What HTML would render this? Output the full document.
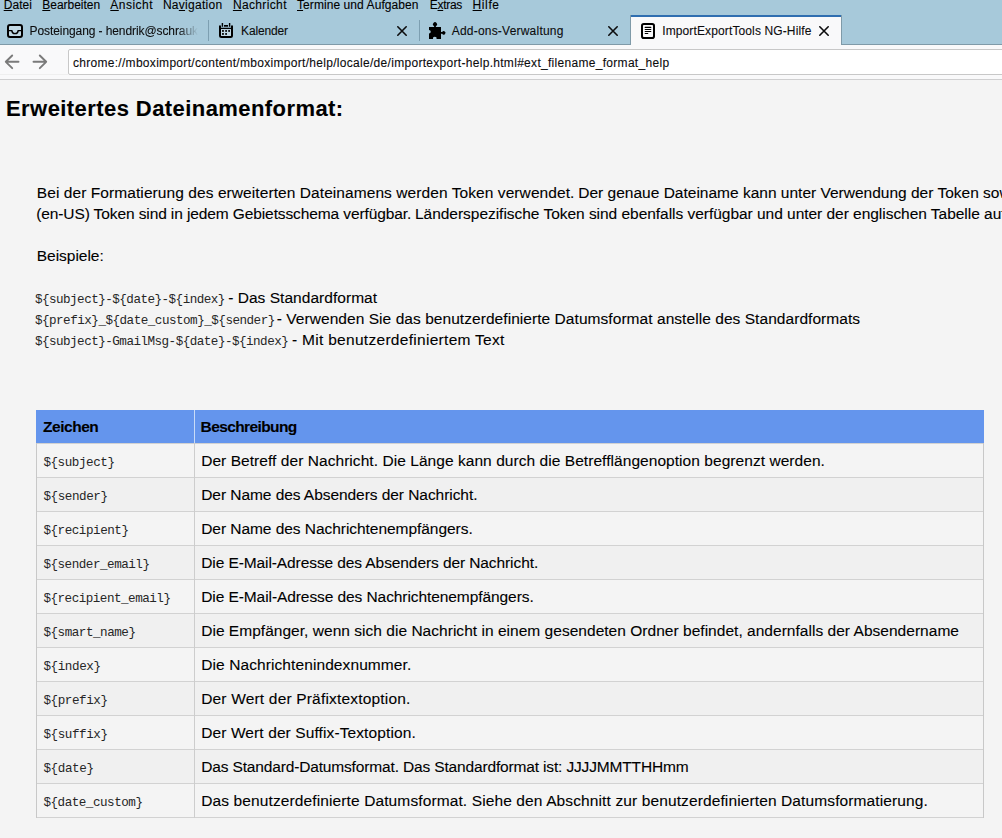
<!DOCTYPE html>
<html><head><meta charset="utf-8">
<style>
html,body{margin:0;padding:0;width:1002px;height:838px;overflow:hidden;background:#f4f4f4;font-family:"Liberation Sans",sans-serif;}
.abs{position:absolute;}
.t{position:absolute;white-space:pre;line-height:normal;-webkit-text-stroke:0.1px currentColor;}
#topbar{position:absolute;left:0;top:0;width:1002px;height:44px;background:#a7c9da;}
#topline{position:absolute;left:0;top:44px;width:1002px;height:1px;background:#7f9aa8;}
#nav{position:absolute;left:0;top:45px;width:1002px;height:34px;background:#f9f9fa;}
#navline{position:absolute;left:0;top:79px;width:1002px;height:1px;background:#cfcfd0;}
#url{position:absolute;left:68px;top:49px;width:940px;height:24px;background:#fff;border:1px solid #c8c8c8;border-radius:2px;}
.sep{position:absolute;top:20px;width:1px;height:21px;background:#7d9fb1;}
#atab{position:absolute;left:630px;top:15px;width:210px;height:30px;background:#f9f9fa;border-left:1px solid #7f9aa8;border-right:1px solid #7f9aa8;}
#atab .line{position:absolute;left:0;top:0;width:100%;height:2px;background:#2f6eb0;}
.ul0 .u,.ul1 .u,.ul2 .u{text-decoration:underline;}
.fade{-webkit-mask-image:linear-gradient(to right,#000 148px,transparent 168px);}
</style></head><body>
<div id="topbar"></div>
<div id="topline"></div>
<div class="sep" style="left:208px"></div>
<div class="sep" style="left:419px"></div>
<div id="atab"><div class="line"></div></div>
<div id="nav"></div>
<div id="navline"></div>
<div id="url"></div>
<div class="abs" style="left:0;top:74px;width:68px;height:1px;background:#efefef"></div>
<div class="abs" style="left:36px;top:410px;width:948px;height:33px;background:#6495ed"></div>
<div class="abs" style="left:194px;top:410px;width:1px;height:33px;background:#c9dbf7"></div>
<div class="abs" style="left:36px;top:443px;width:948px;height:34px;background:#f4f4f4"></div>
<div class="abs" style="left:36px;top:443px;width:948px;height:1px;background:#d2d2d2"></div>
<div class="abs" style="left:36px;top:477px;width:948px;height:34px;background:#f0f0f0"></div>
<div class="abs" style="left:36px;top:477px;width:948px;height:1px;background:#d2d2d2"></div>
<div class="abs" style="left:36px;top:511px;width:948px;height:34px;background:#f4f4f4"></div>
<div class="abs" style="left:36px;top:511px;width:948px;height:1px;background:#d2d2d2"></div>
<div class="abs" style="left:36px;top:545px;width:948px;height:34px;background:#f0f0f0"></div>
<div class="abs" style="left:36px;top:545px;width:948px;height:1px;background:#d2d2d2"></div>
<div class="abs" style="left:36px;top:579px;width:948px;height:34px;background:#f4f4f4"></div>
<div class="abs" style="left:36px;top:579px;width:948px;height:1px;background:#d2d2d2"></div>
<div class="abs" style="left:36px;top:613px;width:948px;height:34px;background:#f0f0f0"></div>
<div class="abs" style="left:36px;top:613px;width:948px;height:1px;background:#d2d2d2"></div>
<div class="abs" style="left:36px;top:647px;width:948px;height:34px;background:#f4f4f4"></div>
<div class="abs" style="left:36px;top:647px;width:948px;height:1px;background:#d2d2d2"></div>
<div class="abs" style="left:36px;top:681px;width:948px;height:34px;background:#f0f0f0"></div>
<div class="abs" style="left:36px;top:681px;width:948px;height:1px;background:#d2d2d2"></div>
<div class="abs" style="left:36px;top:715px;width:948px;height:34px;background:#f4f4f4"></div>
<div class="abs" style="left:36px;top:715px;width:948px;height:1px;background:#d2d2d2"></div>
<div class="abs" style="left:36px;top:749px;width:948px;height:34px;background:#f0f0f0"></div>
<div class="abs" style="left:36px;top:749px;width:948px;height:1px;background:#d2d2d2"></div>
<div class="abs" style="left:36px;top:783px;width:948px;height:34px;background:#f4f4f4"></div>
<div class="abs" style="left:36px;top:783px;width:948px;height:1px;background:#d2d2d2"></div>
<div class="abs" style="left:36px;top:817px;width:948px;height:1px;background:#d2d2d2"></div>
<div class="abs" style="left:36px;top:443px;width:1px;height:375px;background:#c8c8c8"></div>
<div class="abs" style="left:983px;top:443px;width:1px;height:375px;background:#c8c8c8"></div>
<div class="abs" style="left:194px;top:443px;width:1px;height:375px;background:#cdcdcd"></div>

<svg class="abs" style="left:0;top:0" width="1002" height="80" viewBox="0 0 1002 80">
 <!-- inbox -->
 <rect x="8" y="25" width="14" height="12" rx="2" fill="rgba(255,255,255,0.3)" stroke="#000" stroke-width="2"/>
 <path d="M8.5 30.6 H11.8 C12.2 34.6 17.8 34.6 18.2 30.6 H21.5" fill="none" stroke="#000" stroke-width="1.4"/>
 <!-- calendar -->
 <rect x="220.5" y="28.5" width="11" height="8" fill="rgba(255,255,255,0.3)"/>
 <path d="M220 25.5 V35.5 Q220 37 221.5 37 H230.5 Q232 37 232 35.5 V25.5" fill="none" stroke="#000" stroke-width="2"/>
 <path d="M220.5 28.4 H231.5" stroke="#000" stroke-width="1.3"/>
 <path d="M222.4 23 V26.8 M229.6 23 V26.8" stroke="#000" stroke-width="1.4"/>
 <rect x="224" y="25" width="4" height="1.7" fill="#000"/>
 <rect x="222" y="30.1" width="1.9" height="1.7" fill="#000"/>
 <rect x="225.2" y="30.1" width="1.8" height="1.7" fill="#000"/>
 <rect x="228.2" y="30.1" width="1.8" height="1.7" fill="#000"/>
 <rect x="222" y="33.1" width="1.9" height="1.7" fill="#000"/>
 <rect x="225.2" y="33.1" width="1.8" height="1.7" fill="#000"/>
 <!-- close X kalender / addons -->
 <path d="M397.8 26.8 L406.2 35.2 M406.2 26.8 L397.8 35.2" stroke="#0c0c0d" stroke-width="1.6" stroke-linecap="round"/>
 <path d="M608.8 26.8 L617.2 35.2 M617.2 26.8 L608.8 35.2" stroke="#0c0c0d" stroke-width="1.6" stroke-linecap="round"/>
 <path d="M819.8 26.8 L828.2 35.2 M828.2 26.8 L819.8 35.2" stroke="#0c0c0d" stroke-width="1.6" stroke-linecap="round"/>
 <!-- puzzle -->
 <path fill="#000" d="M429 27 H434.1 V26 A2 2 0 1 1 435.9 26 V27 H441 V32 H442.2 A1.75 1.75 0 1 1 442.2 33.8 H441 V39 H436.5 A1.75 1.75 0 1 0 433.1 39 H429 V33.6 A1.75 1.75 0 1 0 429 30.1 Z"/>
 <!-- doc -->
 <rect x="642" y="24" width="12" height="14" rx="1.8" fill="none" stroke="#000" stroke-width="2"/>
 <path d="M645.2 27.4 H650.8 M645.2 29.5 H650.8 M645.2 31.5 H650.8 M645.2 33.5 H647.8" stroke="#000" stroke-width="1.1" stroke-linecap="round"/>
 <!-- arrows -->
 <path d="M18.5 61.8 H5.8 M12.2 55.5 L5.8 61.8 L12.2 68.2" fill="none" stroke="#7a7a7a" stroke-width="1.9" stroke-linecap="round" stroke-linejoin="round"/>
 <path d="M33.5 61.8 H46.2 M39.8 55.5 L46.2 61.8 L39.8 68.2" fill="none" stroke="#7a7a7a" stroke-width="1.9" stroke-linecap="round" stroke-linejoin="round"/>
</svg>

<div class='t menu ul0' style='left:3.7px;top:-2.0px;font-family:"Liberation Sans";font-size:12px;font-weight:400;color:#000;letter-spacing:0.046px'><span class='u'>D</span>atei</div>
<div class='t menu ul0' style='left:42.3px;top:-2.0px;font-family:"Liberation Sans";font-size:12px;font-weight:400;color:#000;letter-spacing:-0.027px'><span class='u'>B</span>earbeiten</div>
<div class='t menu ul0' style='left:110.3px;top:-2.0px;font-family:"Liberation Sans";font-size:12px;font-weight:400;color:#000;letter-spacing:0.473px'><span class='u'>A</span>nsicht</div>
<div class='t menu ul2' style='left:162.9px;top:-2.0px;font-family:"Liberation Sans";font-size:12px;font-weight:400;color:#000;letter-spacing:0.277px'>Na<span class='u'>v</span>igation</div>
<div class='t menu ul0' style='left:232.9px;top:-2.0px;font-family:"Liberation Sans";font-size:12px;font-weight:400;color:#000;letter-spacing:0.364px'><span class='u'>N</span>achricht</div>
<div class='t menu ul0' style='left:297.0px;top:-2.0px;font-family:"Liberation Sans";font-size:12px;font-weight:400;color:#000;letter-spacing:0.074px'><span class='u'>T</span>ermine und Aufgaben</div>
<div class='t menu ul1' style='left:429.8px;top:-2.0px;font-family:"Liberation Sans";font-size:12px;font-weight:400;color:#000;letter-spacing:-0.303px'>E<span class='u'>x</span>tras</div>
<div class='t menu ul0' style='left:472.6px;top:-2.0px;font-family:"Liberation Sans";font-size:12px;font-weight:400;color:#000;letter-spacing:0.596px'><span class='u'>H</span>ilfe</div>
<div class='t fade' style='left:29.6px;top:24.0px;font-family:"Liberation Sans";font-size:12px;font-weight:400;color:#0c0c0d;letter-spacing:-0.091px'>Posteingang - hendrik@schrauk</div>
<div class='t ' style='left:241.1px;top:24.0px;font-family:"Liberation Sans";font-size:12px;font-weight:400;color:#0c0c0d;letter-spacing:-0.164px'>Kalender</div>
<div class='t ' style='left:451.7px;top:24.0px;font-family:"Liberation Sans";font-size:12px;font-weight:400;color:#0c0c0d;letter-spacing:0.213px'>Add-ons-Verwaltung</div>
<div class='t ' style='left:662.2px;top:24.0px;font-family:"Liberation Sans";font-size:12px;font-weight:400;color:#0c0c0d;letter-spacing:0.126px'>ImportExportTools NG-Hilfe</div>
<div class='t ' style='left:72.9px;top:55.6px;font-family:"Liberation Sans";font-size:12px;font-weight:400;color:#0c0c0d;letter-spacing:0.299px'>chrome://mboximport/content/mboximport/help/locale/de/importexport-help.html#ext_filename_format_help</div>
<div class='t ' style='left:6.0px;top:95.5px;font-family:"Liberation Sans";font-size:22px;font-weight:700;color:#000;letter-spacing:0.428px'>Erweitertes Dateinamenformat:</div>
<div class='t ' style='left:36.8px;top:184.0px;font-family:"Liberation Sans";font-size:15.5px;font-weight:400;color:#000;letter-spacing:0.076px'>Bei der Formatierung des erweiterten Dateinamens werden Token verwendet.</div>
<div class='t ' style='left:578.3px;top:184.0px;font-family:"Liberation Sans";font-size:15.5px;font-weight:400;color:#000;letter-spacing:0.002px'>Der genaue Dateiname kann unter Verwendung der Token sowie der</div>
<div class='t ' style='left:36.2px;top:205.0px;font-family:"Liberation Sans";font-size:15.5px;font-weight:400;color:#000;letter-spacing:-0.106px'>(en-US) Token sind in jedem Gebietsschema verfügbar.</div>
<div class='t ' style='left:415.0px;top:205.0px;font-family:"Liberation Sans";font-size:15.5px;font-weight:400;color:#000;letter-spacing:-0.031px'>Länderspezifische Token sind ebenfalls verfügbar und unter der englischen Tabelle aufgeführt.</div>
<div class='t ' style='left:36.8px;top:246.6px;font-family:"Liberation Sans";font-size:15.5px;font-weight:400;color:#000;letter-spacing:-0.035px'>Beispiele:</div>
<div class='t ' style='left:34.9px;top:292.6px;font-family:"Liberation Mono";font-size:12.6px;font-weight:400;color:#262626;letter-spacing:-0.522px;-webkit-text-stroke:0'>${subject}-${date}-${index}</div>
<div class='t ' style='left:228.2px;top:288.6px;font-family:"Liberation Sans";font-size:15.5px;font-weight:400;color:#000;letter-spacing:0.037px'>- Das Standardformat</div>
<div class='t ' style='left:34.9px;top:314.0px;font-family:"Liberation Mono";font-size:12.6px;font-weight:400;color:#262626;letter-spacing:-0.502px;-webkit-text-stroke:0'>${prefix}_${date_custom}_${sender}</div>
<div class='t ' style='left:276.7px;top:310.0px;font-family:"Liberation Sans";font-size:15.5px;font-weight:400;color:#000;letter-spacing:0.056px'>- Verwenden Sie das benutzerdefinierte Datumsformat anstelle des Standardformats</div>
<div class='t ' style='left:34.9px;top:335.0px;font-family:"Liberation Mono";font-size:12.6px;font-weight:400;color:#262626;letter-spacing:-0.519px;-webkit-text-stroke:0'>${subject}-GmailMsg-${date}-${index}</div>
<div class='t ' style='left:292.0px;top:331.0px;font-family:"Liberation Sans";font-size:15.5px;font-weight:400;color:#000;letter-spacing:0.293px'>- Mit benutzerdefiniertem Text</div>
<div class='t ' style='left:43.0px;top:417.7px;font-family:"Liberation Sans";font-size:15.5px;font-weight:700;color:#000;letter-spacing:-0.463px'>Zeichen</div>
<div class='t ' style='left:200.6px;top:417.7px;font-family:"Liberation Sans";font-size:15.5px;font-weight:700;color:#000;letter-spacing:-0.605px'>Beschreibung</div>
<div class='t ' style='left:43.4px;top:455.5px;font-family:"Liberation Mono";font-size:12.6px;font-weight:400;color:#262626;letter-spacing:-0.442px;-webkit-text-stroke:0'>${subject}</div>
<div class='t ' style='left:201.2px;top:451.5px;font-family:"Liberation Sans";font-size:15.5px;font-weight:400;color:#000;letter-spacing:0.055px'>Der Betreff der Nachricht. Die Länge kann durch die Betrefflängenoption begrenzt werden.</div>
<div class='t ' style='left:43.4px;top:489.5px;font-family:"Liberation Mono";font-size:12.6px;font-weight:400;color:#262626;letter-spacing:-0.429px;-webkit-text-stroke:0'>${sender}</div>
<div class='t ' style='left:201.2px;top:485.5px;font-family:"Liberation Sans";font-size:15.5px;font-weight:400;color:#000;letter-spacing:-0.055px'>Der Name des Absenders der Nachricht.</div>
<div class='t ' style='left:43.4px;top:523.5px;font-family:"Liberation Mono";font-size:12.6px;font-weight:400;color:#262626;letter-spacing:-0.464px;-webkit-text-stroke:0'>${recipient}</div>
<div class='t ' style='left:201.2px;top:519.5px;font-family:"Liberation Sans";font-size:15.5px;font-weight:400;color:#000;letter-spacing:-0.047px'>Der Name des Nachrichtenempfängers.</div>
<div class='t ' style='left:43.4px;top:557.5px;font-family:"Liberation Mono";font-size:12.6px;font-weight:400;color:#262626;letter-spacing:-0.484px;-webkit-text-stroke:0'>${sender_email}</div>
<div class='t ' style='left:201.2px;top:553.5px;font-family:"Liberation Sans";font-size:15.5px;font-weight:400;color:#000;letter-spacing:-0.090px'>Die E-Mail-Adresse des Absenders der Nachricht.</div>
<div class='t ' style='left:43.4px;top:591.5px;font-family:"Liberation Mono";font-size:12.6px;font-weight:400;color:#262626;letter-spacing:-0.497px;-webkit-text-stroke:0'>${recipient_email}</div>
<div class='t ' style='left:201.2px;top:587.5px;font-family:"Liberation Sans";font-size:15.5px;font-weight:400;color:#000;letter-spacing:-0.079px'>Die E-Mail-Adresse des Nachrichtenempfängers.</div>
<div class='t ' style='left:43.4px;top:625.5px;font-family:"Liberation Mono";font-size:12.6px;font-weight:400;color:#262626;letter-spacing:-0.471px;-webkit-text-stroke:0'>${smart_name}</div>
<div class='t ' style='left:201.2px;top:621.5px;font-family:"Liberation Sans";font-size:15.5px;font-weight:400;color:#000;letter-spacing:0.029px'>Die Empfänger, wenn sich die Nachricht in einem gesendeten Ordner befindet, andernfalls der Absendername</div>
<div class='t ' style='left:43.4px;top:659.5px;font-family:"Liberation Mono";font-size:12.6px;font-weight:400;color:#262626;letter-spacing:-0.410px;-webkit-text-stroke:0'>${index}</div>
<div class='t ' style='left:201.2px;top:655.5px;font-family:"Liberation Sans";font-size:15.5px;font-weight:400;color:#000;letter-spacing:0.095px'>Die Nachrichtenindexnummer.</div>
<div class='t ' style='left:43.4px;top:693.5px;font-family:"Liberation Mono";font-size:12.6px;font-weight:400;color:#262626;letter-spacing:-0.429px;-webkit-text-stroke:0'>${prefix}</div>
<div class='t ' style='left:201.2px;top:689.5px;font-family:"Liberation Sans";font-size:15.5px;font-weight:400;color:#000;letter-spacing:0.180px'>Der Wert der Präfixtextoption.</div>
<div class='t ' style='left:43.4px;top:727.5px;font-family:"Liberation Mono";font-size:12.6px;font-weight:400;color:#262626;letter-spacing:-0.429px;-webkit-text-stroke:0'>${suffix}</div>
<div class='t ' style='left:201.2px;top:723.5px;font-family:"Liberation Sans";font-size:15.5px;font-weight:400;color:#000;letter-spacing:0.105px'>Der Wert der Suffix-Textoption.</div>
<div class='t ' style='left:43.4px;top:761.5px;font-family:"Liberation Mono";font-size:12.6px;font-weight:400;color:#262626;letter-spacing:-0.384px;-webkit-text-stroke:0'>${date}</div>
<div class='t ' style='left:201.2px;top:757.5px;font-family:"Liberation Sans";font-size:15.5px;font-weight:400;color:#000;letter-spacing:-0.153px'>Das Standard-Datumsformat. Das Standardformat ist: JJJJMMTTHHmm</div>
<div class='t ' style='left:43.4px;top:795.5px;font-family:"Liberation Mono";font-size:12.6px;font-weight:400;color:#262626;letter-spacing:-0.478px;-webkit-text-stroke:0'>${date_custom}</div>
<div class='t ' style='left:201.2px;top:791.5px;font-family:"Liberation Sans";font-size:15.5px;font-weight:400;color:#000;letter-spacing:0.117px'>Das benutzerdefinierte Datumsformat. Siehe den Abschnitt zur benutzerdefinierten Datumsformatierung.</div>
</body></html>
